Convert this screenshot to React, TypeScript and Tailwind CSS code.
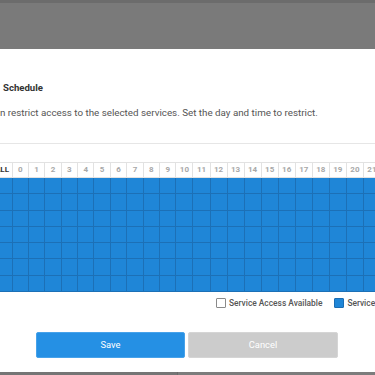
const hours = Array.from({ length: 24 }, (_, i) => i)
const days = [0, 1, 2, 3, 4, 5, 6]

function HeaderCell({ label, wide }: { label: string; wide?: boolean }) {
  return (
    <div
      className={`${wide ? "w-[17.06px]" : "w-[16.4px]"} shrink-0 h-[16px] border-r border-t border-b border-[#e2e2e2] flex items-center justify-center text-[8px] font-bold text-[#a8a8a8]`}
    >
      {label}
    </div>
  )
}

function BlueCell({ wide }: { wide?: boolean }) {
  return <div className={`${wide ? "w-[17.06px]" : "w-[16.4px]"} shrink-0 h-[16.3px] border-r border-b border-[#1c70b6] bg-[#1f86d7]`} />
}

export default function App() {
  return (
    <div className="w-[375px] h-[375px] overflow-hidden bg-white flex flex-col font-['Roboto','Liberation_Sans',sans-serif]">
      {/* dimmed page behind the modal */}
      <div className="h-[49px] shrink-0 bg-[#7a7a7a] border-t-[3px] border-[#6c6c6c]" />

      <div className="flex-1 flex flex-col">
        <h2 className="mt-[33px] pl-[3px] h-[12px] leading-[12px] text-[9.6px] font-bold text-[#333] whitespace-nowrap">
          Schedule
        </h2>
        <p className="mt-[13px] h-[12px] leading-[12px] text-[9.8px] text-[#555] whitespace-nowrap">
          n restrict access to the selected services. Set the day and time to restrict.
        </p>

        <div className="mt-[24px] border-t border-[#e6e6e6]" />

        {/* schedule grid */}
        <div className="mt-[18px] ml-[-7.5px] flex flex-col">
          <div className="flex">
            <div className="w-[20px] shrink-0 h-[16px] border-r border-t border-b border-[#e2e2e2] flex items-center justify-center text-[8px] font-bold text-[#333]">
              ALL
            </div>
            {hours.map((h) => (
              <HeaderCell key={h} label={String(h)} wide={h >= 10} />
            ))}
          </div>
          {days.map((d) => (
            <div key={d} className="flex">
              <div className="w-[20px] shrink-0 h-[16.3px] border-r border-b border-[#1c70b6] bg-[#1f86d7]" />
              {hours.map((h) => (
                <BlueCell key={h} wide={h >= 10} />
              ))}
            </div>
          ))}
        </div>

        {/* legend */}
        <div className="mt-[5px] pl-[216px] h-[12px] flex items-center whitespace-nowrap text-[8.4px] font-medium text-[#555]">
          <span className="w-[10px] h-[10px] shrink-0 border border-[#8a8a8a] rounded-[1px] bg-white" />
          <span className="ml-[3px]">Service Access Available</span>
          <span className="ml-[12px] w-[10px] h-[10px] shrink-0 border border-[#1b6db3] rounded-[1px] bg-[#1f86d7]" />
          <span className="ml-[3px]">Service Access Restricted</span>
        </div>

        {/* actions */}
        <div className="mt-[23px] pl-[36px] flex gap-[3px]">
          <button className="w-[149px] h-[26px] rounded-[2px] bg-[#2590e4] border border-[#47a2ea] text-white text-[9.4px]">
            Save
          </button>
          <button className="w-[150px] h-[26px] rounded-[2px] bg-[#cccccc] border border-[#d5d5d5] text-white text-[9.4px]">
            Cancel
          </button>
        </div>
      </div>

      <div className="h-[3px] shrink-0 flex">
        <div className="w-[178px] bg-[#757575] border-r border-[#6a6a6a]" />
        <div className="flex-1 bg-[#7c7c7c]" />
      </div>
    </div>
  )
}
